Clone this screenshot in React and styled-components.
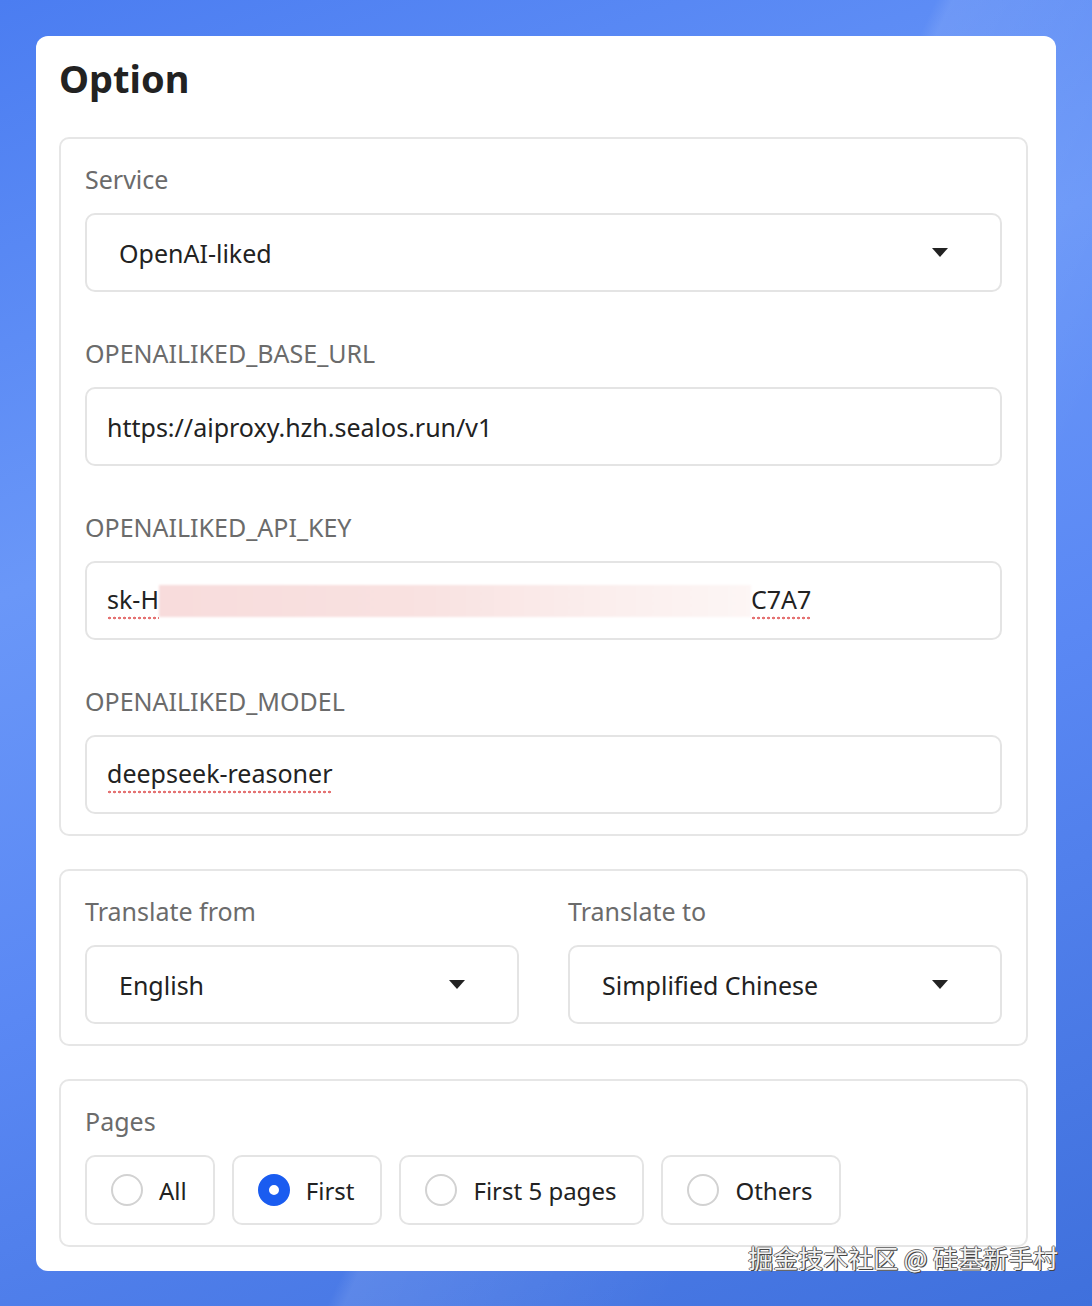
import React from 'react';
import styled, { createGlobalStyle } from 'styled-components';

const GlobalStyle = createGlobalStyle`
  html, body {
    margin: 0;
    padding: 0;
  }
  body {
    min-height: 1306px;
    font-family: "Noto Sans", "Liberation Sans", sans-serif;
    background:
      linear-gradient(115deg, rgba(255,255,255,0) 0%, rgba(255,255,255,0) 55%, rgba(255,255,255,0.10) 56%, rgba(255,255,255,0) 75%),
      linear-gradient(160deg, #4b7df1 0%, #6a97f8 35%, #5a88f4 60%, #3f70dc 100%);
  }
`;

const Page = styled.div`
  padding: 36px;
`;

const Card = styled.div`
  position: relative;
  background: #fff;
  border-radius: 12px;
  padding: 16px 28px 24px 23px;
  display: flex;
  flex-direction: column;
  gap: 33px;
`;

const Title = styled.h1`
  margin: 0;
  font-size: 38px;
  line-height: 52px;
  font-weight: 700;
  color: #222;
`;

const Section = styled.div`
  border: 2px solid #e6e6e6;
  border-radius: 10px;
  padding: 22px 24px 20px 24px;
  display: flex;
  flex-direction: column;
`;

const Field = styled.div`
  display: flex;
  flex-direction: column;
  gap: 16px;
  flex: 1;
  & + & {
    margin-top: 43px;
  }
`;

const Label = styled.div`
  font-size: 25px;
  line-height: 36px;
  color: #6b6b6b;
`;

const Row = styled.div`
  display: flex;
  gap: 49px;
  & > ${Field} + ${Field} {
    margin-top: 0;
  }
`;

const Box = styled.div`
  box-sizing: border-box;
  height: 79px;
  border: 2px solid #e4e4e4;
  border-radius: 10px;
  display: flex;
  align-items: center;
  padding: ${p => (p.$select ? '0 52px 0 32px' : '0 20px')};
  font-size: 25px;
  color: #222;
  position: relative;
`;

const Value = styled.span`
  flex: 1;
`;

const Misspelled = styled.span`
  padding-bottom: 4px;
  background-image: radial-gradient(circle, #e57373 1.2px, transparent 1.6px);
  background-size: 5px 4px;
  background-repeat: repeat-x;
  background-position: 0 100%;
`;

const Redacted = styled.span`
  display: inline-block;
  width: 592px;
  height: 32px;
  vertical-align: middle;
  background: linear-gradient(90deg, #f8dcdc 0%, #f9e2e1 45%, #fbeeed 75%, #fdf6f5 100%);
  filter: blur(1px);
`;

const Caret = styled.span`
  width: 0;
  height: 0;
  border-left: 8px solid transparent;
  border-right: 8px solid transparent;
  border-top: 9px solid #222;
`;

const Radios = styled.div`
  display: flex;
  gap: 17px;
`;

const RadioItem = styled.div`
  box-sizing: border-box;
  height: 70px;
  border: 2px solid #e4e4e4;
  border-radius: 10px;
  display: flex;
  align-items: center;
  gap: 16px;
  padding: 0 26px 0 24px;
  font-size: 24px;
  color: #222;
`;

const Dot = styled.span`
  box-sizing: border-box;
  width: 32px;
  height: 32px;
  border-radius: 50%;
  border: ${p => (p.$on ? '11px solid #1a5cf0' : '2px solid #d2d2d2')};
  background: #fff;
`;

const Watermark = styled.div`
  position: absolute;
  right: -2px;
  bottom: -4px;
  font-family: "Noto Sans CJK SC", "Noto Sans", sans-serif;
  font-size: 25px;
  font-weight: 400;
  color: #f2f2f2;
  text-shadow: 1px 1px 0 #444, -1px 0 0 #666, 0 -1px 0 #777, 1px 0 0 #555;
  white-space: nowrap;
`;

const Select = ({ children }) => (
  <Box $select>
    <Value>{children}</Value>
    <Caret />
  </Box>
);

const pages = [
  { id: 'all', text: 'All' },
  { id: 'first', text: 'First', on: true },
  { id: 'first5', text: 'First 5 pages' },
  { id: 'others', text: 'Others' },
];

export default function App() {
  return (
    <>
      <GlobalStyle />
      <Page>
        <Card>
          <Title>Option</Title>

          <Section>
            <Field>
              <Label>Service</Label>
              <Select>OpenAI-liked</Select>
            </Field>
            <Field>
              <Label>OPENAILIKED_BASE_URL</Label>
              <Box>https://aiproxy.hzh.sealos.run/v1</Box>
            </Field>
            <Field>
              <Label>OPENAILIKED_API_KEY</Label>
              <Box>
                <Misspelled>sk-H</Misspelled>
                <Redacted />
                <Misspelled>C7A7</Misspelled>
              </Box>
            </Field>
            <Field>
              <Label>OPENAILIKED_MODEL</Label>
              <Box>
                <Misspelled>deepseek-reasoner</Misspelled>
              </Box>
            </Field>
          </Section>

          <Section>
            <Row>
              <Field>
                <Label>Translate from</Label>
                <Select>English</Select>
              </Field>
              <Field>
                <Label>Translate to</Label>
                <Select>Simplified Chinese</Select>
              </Field>
            </Row>
          </Section>

          <Section>
            <Field>
              <Label>Pages</Label>
              <Radios>
                {pages.map(p => (
                  <RadioItem key={p.id}>
                    <Dot $on={p.on} />
                    {p.text}
                  </RadioItem>
                ))}
              </Radios>
            </Field>
          </Section>

          <Watermark>掘金技术社区 @ 硅基新手村</Watermark>
        </Card>
      </Page>
    </>
  );
}
